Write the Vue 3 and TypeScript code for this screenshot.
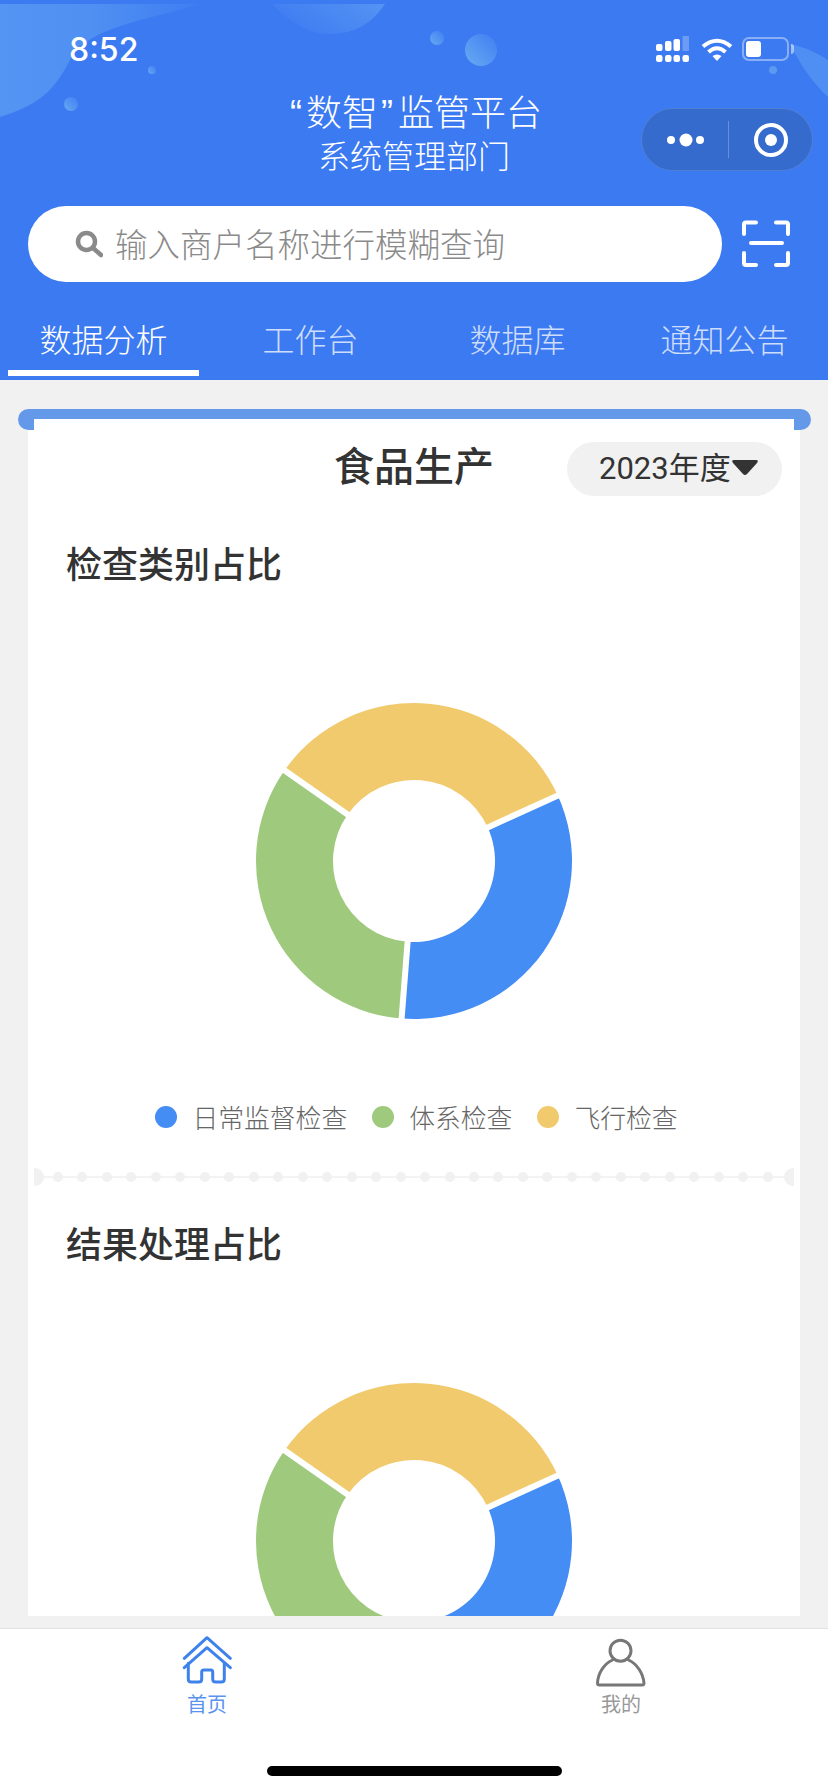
<template>
  <div class="page">
    <header class="top">
      <svg class="top-bg" width="828" height="380" viewBox="0 0 828 380" aria-hidden="true">
        <defs>
          <linearGradient id="blobLeft" x1="0" y1="0" x2="1" y2="0">
            <stop offset="0" stop-color="#5494f2" />
            <stop offset="0.45" stop-color="#4f90f2" />
            <stop offset="1" stop-color="#3f7ef2" />
          </linearGradient>
          <linearGradient id="blobMid" x1="1" y1="0" x2="0" y2="0.4">
            <stop offset="0" stop-color="#5593f3" />
            <stop offset="1" stop-color="#3f7df2" />
          </linearGradient>
          <linearGradient id="ball" x1="1" y1="0" x2="0" y2="1">
            <stop offset="0" stop-color="#3f7ef2" />
            <stop offset="1" stop-color="#68aaf2" />
          </linearGradient>
        </defs>
        <path d="M0 4H198C150 20 92 26 72 56C56 88 42 104 0 117Z" fill="url(#blobLeft)" />
        <path d="M272 4H385C370 26 352 34 328 34C308 34 288 20 272 4Z" fill="url(#blobMid)" />
        <path d="M790 44C802 68 814 84 828 97V60C816 52 804 47 790 44Z" fill="#4f8ef3" />
        <circle cx="71" cy="104" r="7" fill="url(#ball)" />
        <circle cx="152" cy="70" r="4" fill="url(#ball)" />
        <circle cx="437" cy="38" r="7" fill="url(#ball)" />
        <circle cx="481" cy="50" r="16" fill="url(#ball)" />
        <circle cx="773" cy="70" r="4" fill="#5c9af0" />
      </svg>

      <div class="status">
        <span class="clock">8:52</span>
        <div class="status-icons">
          <svg width="34" height="26" viewBox="0 0 34 26" fill="#fff">
            <rect x="0" y="8" width="6.5" height="7" rx="2" />
            <rect x="9" y="5" width="6.5" height="10" rx="2" />
            <rect x="17.5" y="3" width="6.5" height="12" rx="2" />
            <rect x="26.5" y="0" width="6.5" height="15" rx="1" opacity="0.25" />
            <rect x="0" y="19" width="6.5" height="7" rx="2.2" />
            <rect x="9" y="19" width="6.5" height="7" rx="2.2" />
            <rect x="17.5" y="19" width="6.5" height="7" rx="2.2" />
            <rect x="26.5" y="19" width="6.5" height="7" rx="2.2" />
          </svg>
          <svg width="32" height="23" viewBox="0 0 32 23" fill="none" stroke="#fff">
            <path d="M2 8.5Q16 -3 30 8.5" stroke-width="4" />
            <path d="M7.5 14Q16 6.5 24.5 14" stroke-width="4" />
            <path d="M11.5 18Q16 15 20.5 18L16 23Z" fill="#fff" stroke="none" />
          </svg>
          <div class="battery">
            <span class="battery-level"></span>
          </div>
        </div>
      </div>

      <div class="title-row">
        <div></div>
        <div class="title">
          <div class="title-main"><span class="quote-start">“</span>数智<span class="quote-end">”</span>监管平台</div>
          <div class="title-sub">系统管理部门</div>
        </div>
        <div class="capsule">
          <svg width="44" height="14" viewBox="0 0 44 14" fill="#fff">
            <circle cx="4" cy="7" r="4" />
            <circle cx="19" cy="7" r="6.5" />
            <circle cx="33" cy="7" r="4" />
          </svg>
          <span class="capsule-line"></span>
          <svg width="36" height="36" viewBox="0 0 36 36">
            <circle cx="18" cy="18" r="15" fill="none" stroke="#fff" stroke-width="4" />
            <circle cx="18" cy="18" r="6" fill="#fff" />
          </svg>
        </div>
      </div>

      <div class="search-row">
        <div class="search">
          <svg width="28" height="28" viewBox="0 0 28 28" fill="none" stroke="#8a8a8a">
            <circle cx="11.5" cy="11.5" r="8.5" stroke-width="4.5" />
            <path d="M18 18L26 25" stroke-width="4.5" stroke-linecap="round" />
          </svg>
          <span class="placeholder">输入商户名称进行模糊查询</span>
        </div>
        <svg class="scan" width="48" height="48" viewBox="0 0 48 48" fill="none" stroke="#fff" stroke-width="4" stroke-linecap="round" stroke-linejoin="round">
          <path d="M2 14V4.5Q2 2.5 4 2.5H14" />
          <path d="M34 2.5H44Q46 2.5 46 4.5V14" />
          <path d="M2 33V43Q2 45 4 45H14" />
          <path d="M34 45H44Q46 45 46 43V33" />
          <path d="M9 23H40" />
        </svg>
      </div>

      <nav class="tabs">
        <div v-for="(tab, i) in tabs" :key="tab" class="tab" :class="{ active: i === activeTab }" @click="activeTab = i">
          <span class="tab-text">{{ tab }}</span>
          <span class="tab-line"></span>
        </div>
      </nav>
    </header>

    <main class="content">
      <div class="slot">
        <div class="slot-paper"></div>
      </div>
      <section class="card">
        <div class="card-head">
          <div></div>
          <h2 class="card-title">食品生产</h2>
          <div class="year">
            <span>2023年度</span>
            <svg width="28" height="17" viewBox="0 0 28 17">
              <path d="M3 1H25Q28 1 26 4L16 15Q14 17 12 15L2 4Q0 1 3 1Z" fill="#333" />
            </svg>
          </div>
        </div>

        <h3 class="chart-title">检查类别占比</h3>
        <svg class="donut" width="320" height="320" viewBox="-160 -160 320 320">
          <path v-for="s in sectors" :key="s.color" :d="s.d" :fill="s.color" />
          <line v-for="s in sectors" :key="s.color" :x1="s.x1" :y1="s.y1" :x2="s.x2" :y2="s.y2" stroke="#fff" stroke-width="6" />
        </svg>
        <div class="legend">
          <div v-for="item in legend" :key="item.label" class="legend-item">
            <span class="legend-dot" :style="{ background: item.color }"></span>
            <span>{{ item.label }}</span>
          </div>
        </div>

        <div class="divider">
          <span class="cap cap-left"></span>
          <div class="dots">
            <span v-for="n in 30" :key="n" class="dot"></span>
          </div>
          <span class="cap cap-right"></span>
        </div>

        <h3 class="chart-title second">结果处理占比</h3>
        <svg class="donut" width="320" height="320" viewBox="-160 -160 320 320">
          <path v-for="s in sectors" :key="s.color" :d="s.d" :fill="s.color" />
          <line v-for="s in sectors" :key="s.color" :x1="s.x1" :y1="s.y1" :x2="s.x2" :y2="s.y2" stroke="#fff" stroke-width="6" />
        </svg>
      </section>
    </main>

    <footer class="tabbar">
      <div class="tabbar-row">
        <div class="tabbar-item active">
          <svg width="50" height="52" viewBox="0 0 50 52" fill="none" stroke="#3f82ec" stroke-width="3" stroke-linecap="round" stroke-linejoin="round">
            <path d="M2.3 22.3L25 1.7L48.3 22.3" />
            <path d="M2.3 31.7L25 11.7L48.3 31.7" />
            <path d="M6.3 27.3V43Q6.3 46 9.3 46H16.7Q19.7 46 19.7 43V36Q19.7 34 21.7 34H28.7Q30.7 34 30.7 36V43Q30.7 46 33.7 46H39.3Q42.3 46 42.3 43V27.3" />
          </svg>
          <span>首页</span>
        </div>
        <div class="tabbar-item">
          <svg width="50" height="52" viewBox="0 0 50 52" fill="none" stroke="#777" stroke-width="3" stroke-linecap="round" stroke-linejoin="round">
            <circle cx="24.5" cy="14.7" r="10.5" />
            <path d="M16.5 24C8 28 2 37 1.5 47Q1.5 49 3.5 49H46Q48 49 48 47C47 37 41 28 32.5 24" />
          </svg>
          <span>我的</span>
        </div>
      </div>
      <span class="home-bar"></span>
    </footer>
  </div>
</template>

<script setup lang="ts">
import { ref } from 'vue'

interface Sector {
  color: string
  d: string
  x1: number
  y1: number
  x2: number
  y2: number
}

const tabs = ['数据分析', '工作台', '数据库', '通知公告']
const activeTab = ref(0)

const legend = [
  { label: '日常监督检查', color: '#448df5' },
  { label: '体系检查', color: '#9fca7e' },
  { label: '飞行检查', color: '#f2ca6e' },
]

const OUTER = 158
const INNER = 81

// angles are clockwise from 12 o'clock
const point = (r: number, deg: number): [number, number] => {
  const rad = (deg * Math.PI) / 180
  return [r * Math.sin(rad), -r * Math.cos(rad)]
}

const makeSector = (color: string, from: number, to: number): Sector => {
  const [ax, ay] = point(OUTER, from)
  const [bx, by] = point(OUTER, to)
  const [cx, cy] = point(INNER, to)
  const [dx, dy] = point(INNER, from)
  const [x1, y1] = point(INNER - 3, from)
  const [x2, y2] = point(OUTER + 2, from)
  return {
    color,
    d: `M${ax} ${ay}A${OUTER} ${OUTER} 0 0 1 ${bx} ${by}L${cx} ${cy}A${INNER} ${INNER} 0 0 0 ${dx} ${dy}Z`,
    x1,
    y1,
    x2,
    y2,
  }
}

const sectors: Sector[] = [
  makeSector('#448df5', 65.5, 184.5),
  makeSector('#9fca7e', 184.5, 305),
  makeSector('#f2ca6e', 305, 425.5),
]
</script>

<style scoped>
.page {
  position: relative;
  width: 828px;
  height: 1792px;
  overflow: hidden;
  display: flex;
  flex-direction: column;
  background: #f1f1f1;
  font-family: "Noto Sans CJK SC", "Liberation Sans", sans-serif;
  color: #333;
}

.top {
  position: relative;
  flex: none;
  height: 380px;
  background: #3c7af2;
  color: #fff;
}

.top-bg {
  position: absolute;
  top: 0;
  left: 0;
}

.status {
  position: relative;
  height: 90px;
  padding: 8px 39px 0 69px;
  box-sizing: border-box;
  display: flex;
  align-items: center;
  justify-content: space-between;
}

.clock {
  font-family: Inter, "Liberation Sans", sans-serif;
  font-size: 32px;
  font-weight: 500;
}

.status-icons {
  display: flex;
  align-items: center;
}

.status-icons svg:nth-child(2) {
  margin: 0 9px 0 11px;
}

.battery {
  position: relative;
  width: 47px;
  height: 24px;
  box-sizing: border-box;
  padding: 2px;
  border: 2px solid rgba(255, 255, 255, 0.4);
  border-radius: 7px;
}

.battery::after {
  content: "";
  position: absolute;
  top: 5px;
  right: -7px;
  width: 3px;
  height: 10px;
  border-radius: 0 3px 3px 0;
  background: rgba(255, 255, 255, 0.5);
}

.battery-level {
  display: block;
  width: 15px;
  height: 16px;
  border-radius: 3px;
  background: #fff;
}

.title-row {
  position: relative;
  display: grid;
  grid-template-columns: 1fr auto 1fr;
}

.title {
  font-family: "Liberation Sans", "Noto Sans CJK SC", sans-serif;
  text-align: center;
  padding-top: 2px;
}

.title-main {
  padding-left: 4px;
  font-size: 36px;
  font-weight: 300;
  line-height: 44px;
}

.quote-start {
  margin-right: 4px;
}

.quote-end {
  margin: 0 5px 0 3px;
}

.title-sub {
  font-size: 32px;
  font-weight: 300;
  line-height: 42px;
}

.capsule {
  justify-self: end;
  margin: 18px 15px 0 0;
  width: 172px;
  height: 63px;
  box-sizing: border-box;
  display: flex;
  align-items: center;
  padding-left: 25px;
  background: #346bcd;
  border: 1px solid rgba(255, 255, 255, 0.14);
  border-radius: 32px;
}

.capsule-line {
  width: 1px;
  height: 37px;
  margin: 0 24px 0 17px;
  background: rgba(255, 255, 255, 0.25);
}

.search-row {
  position: relative;
  margin-top: 28px;
  padding-left: 28px;
  display: flex;
  align-items: center;
}

.search {
  width: 694px;
  height: 76px;
  box-sizing: border-box;
  padding-left: 47px;
  display: flex;
  align-items: center;
  gap: 12px;
  background: #fff;
  border-radius: 38px;
}

.placeholder {
  font-size: 32.5px;
  font-weight: 300;
  color: #8a8a8a;
  margin-top: -4px;
}

.scan {
  margin-left: 20px;
}

.tabs {
  position: relative;
  margin-top: 26px;
  display: grid;
  grid-template-columns: repeat(4, 207px);
}

.tab {
  display: flex;
  flex-direction: column;
  align-items: center;
  cursor: pointer;
  color: rgba(255, 255, 255, 0.75);
}

.tab.active {
  color: #fff;
}

.tab-text {
  font-size: 32px;
  font-weight: 300;
  line-height: 60px;
  margin-bottom: 2px;
}

.tab-line {
  width: 191px;
  height: 6px;
}

.tab.active .tab-line {
  background: #fff;
}

.content {
  flex: 1;
  min-height: 0;
  overflow: hidden;
  padding-top: 29px;
}

.slot {
  position: relative;
  height: 21px;
  margin: 0 17px 0 18px;
  border-radius: 11px;
  background: #6499ea;
}

.slot-paper {
  position: absolute;
  top: 10px;
  bottom: 0;
  left: 16px;
  right: 17px;
  background: #fff;
}

.card {
  height: 1186px;
  margin: 0 28px;
  overflow: hidden;
  background: #fff;
}

.card-head {
  display: grid;
  grid-template-columns: 1fr auto 1fr;
  align-items: center;
  padding-top: 12px;
}

.card-title {
  margin: -10px 0 0;
  font-size: 40px;
  font-weight: 500;
  line-height: 50px;
}

.year {
  justify-self: end;
  margin-right: 18px;
  width: 215px;
  height: 54px;
  box-sizing: border-box;
  padding: 0 0 4px 32px;
  display: flex;
  align-items: center;
  font-size: 31px;
  border-radius: 27px;
  background: #f1f1f1;
}

.year span {
  margin-bottom: 4px;
  font-family: Roboto, "Noto Sans CJK SC", sans-serif;
}

.chart-title {
  margin: 41px 0 0 38px;
  font-size: 36px;
  font-weight: 500;
  line-height: 50px;
}

.chart-title.second {
  margin-top: 31px;
}

.donut {
  display: block;
  margin: 114px auto 0;
}

.legend {
  margin-top: 78px;
  padding-left: 5px;
  display: flex;
  justify-content: center;
  gap: 25px;
  font-size: 25.8px;
  font-weight: 300;
  line-height: 36px;
  color: #666;
}

.legend-item {
  display: flex;
  align-items: center;
  gap: 15px;
}

.legend-dot {
  width: 22px;
  height: 22px;
  border-radius: 50%;
}

.divider {
  margin: 33px 6px 0;
  height: 18px;
  display: flex;
  align-items: center;
  background: linear-gradient(#f3f3f3, #f3f3f3) center / 100% 2px no-repeat;
}

.cap {
  width: 10px;
  height: 18px;
  background: #f1f1f1;
}

.cap-left {
  border-radius: 0 9px 9px 0;
}

.cap-right {
  border-radius: 9px 0 0 9px;
}

.dots {
  flex: 1;
  margin: 0 11px 0 9px;
  display: flex;
  justify-content: space-between;
}

.dot {
  width: 10px;
  height: 10px;
  border-radius: 50%;
  background: #f1f1f1;
}

.tabbar {
  flex: none;
  height: 164px;
  box-sizing: border-box;
  padding-top: 7px;
  display: flex;
  flex-direction: column;
  align-items: center;
  background: #fff;
  border-top: 1px solid #e2e2e2;
}

.tabbar-row {
  width: 100%;
  display: grid;
  grid-template-columns: 1fr 1fr;
}

.tabbar-item {
  display: flex;
  flex-direction: column;
  align-items: center;
  font-size: 20px;
  line-height: 24px;
  color: #999;
}

.tabbar-item span {
  margin-top: 4px;
}

.tabbar-item.active {
  color: #5a93ee;
}

.home-bar {
  width: 295px;
  height: 10px;
  margin-top: 50px;
  border-radius: 5px;
  background: #000;
}
</style>

<style>
html,
body {
  margin: 0;
}
</style>
